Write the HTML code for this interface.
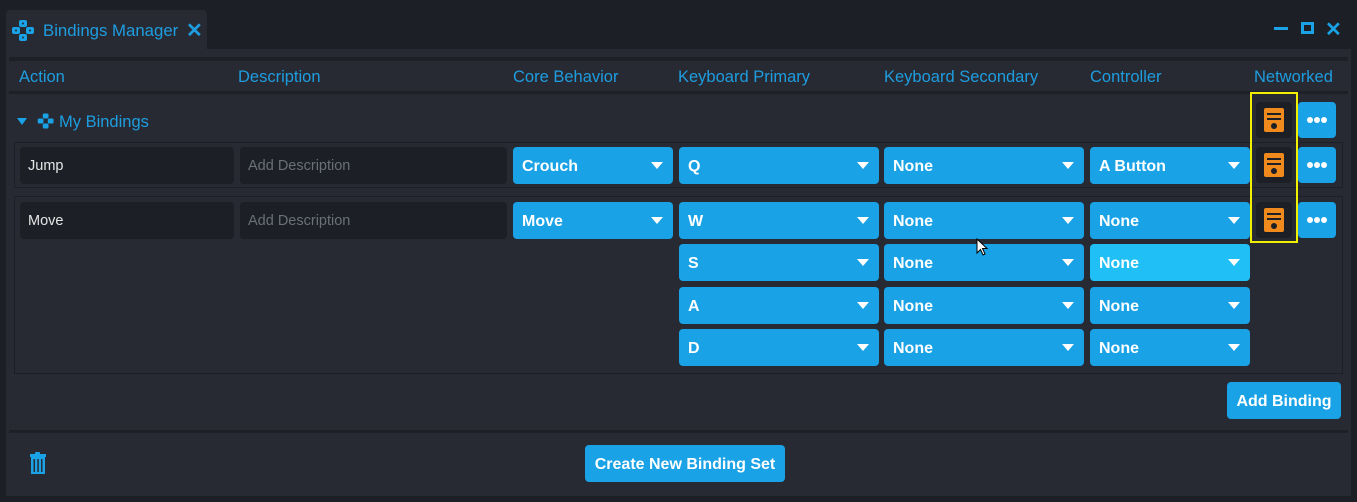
<!DOCTYPE html>
<html><head><meta charset="utf-8"><style>
*{box-sizing:border-box;margin:0;padding:0}
body{width:1357px;height:502px;background:#1c1f26;font-family:"Liberation Sans",sans-serif;position:relative;overflow:hidden}
.a{position:absolute}
.panel{left:6px;top:49px;width:1345px;height:447px;background:#272a33}
.tab{left:6px;top:10px;width:201px;height:40px;background:#272a33;border-radius:4px 4px 0 0}
.hd{color:#1e9de0;font-size:16.5px;top:68px}
.inp{height:37px;background:#1c1f26;border-radius:4px;font-size:14.5px;color:#e6e6e6;padding:0 0 0 8px;line-height:39px}
.ph{color:#6b6f78}
.dd{height:37px;background:#19a2e6;border-radius:4px;color:#fff;font-weight:bold;font-size:16px;line-height:39px;padding-left:9px}
.dd:after{content:"";position:absolute;right:10px;top:15px;border-left:6px solid transparent;border-right:6px solid transparent;border-top:7px solid #fff}
.net{width:36px;height:36px;background:#1c1f26;border-radius:4px}
.net i{position:absolute;left:8px;top:6px;width:20px;height:24px;background:#f08a1c;border-radius:2px}
.net i:before{content:"";position:absolute;left:3px;top:5px;width:14px;height:2px;background:#1c1f26;box-shadow:0 5px 0 #1c1f26}
.net i:after{content:"";position:absolute;left:7px;top:15px;width:6px;height:6px;border-radius:50%;background:#1c1f26}
.dots{width:38px;height:36px;background:#19a2e6;border-radius:4px}
.dots b{position:absolute;top:15px;width:6px;height:6px;border-radius:50%;background:#fff}
.box{border:1px solid #1c1f26}
.btn{background:#19a2e6;border-radius:4px;color:#fff;font-weight:bold;font-size:16px;text-align:center}
</style></head><body>
<div class="a tab"></div>
<div class="a panel"></div>
<svg class="a" style="left:11px;top:19px" width="25" height="23" viewBox="0 0 25 23"><g fill="#19a2e6"><rect x="8" y="1" width="8" height="7" rx="2"/><rect x="1" y="8" width="8" height="7" rx="2"/><rect x="15" y="8" width="8" height="7" rx="2"/><rect x="8" y="15" width="8" height="7" rx="2"/></g><g fill="#272a33"><circle cx="12" cy="4.5" r="1"/><circle cx="5" cy="11.5" r="1"/><circle cx="19" cy="11.5" r="1"/><circle cx="12" cy="18.5" r="1"/></g></svg>
<div class="a" style="left:43px;top:21px;color:#1e9de0;font-size:16.8px">Bindings Manager</div>
<div class="a" style="left:186px;top:18px;color:#1e9de0;font-size:20px;font-weight:bold">✕</div>
<div class="a" style="left:1274px;top:27px;width:14px;height:3px;background:#19a2e6"></div>
<div class="a" style="left:1301px;top:22px;width:13px;height:12px;border:3px solid #19a2e6"></div>
<div class="a" style="left:1325px;top:17px;color:#19a2e6;font-size:20px;font-weight:bold">✕</div>
<div class="a" style="left:9px;top:57px;width:1339px;height:4px;background:#1e2028"></div>
<div class="a" style="left:9px;top:91px;width:1339px;height:3px;background:#1e2028"></div>
<div class="a hd" style="left:19px">Action</div>
<div class="a hd" style="left:238px">Description</div>
<div class="a hd" style="left:513px">Core Behavior</div>
<div class="a hd" style="left:678px">Keyboard Primary</div>
<div class="a hd" style="left:884px">Keyboard Secondary</div>
<div class="a hd" style="left:1090px">Controller</div>
<div class="a hd" style="left:1254px">Networked</div>
<div class="a" style="left:17px;top:118px;border-left:5px solid transparent;border-right:5px solid transparent;border-top:7px solid #19a2e6"></div>
<svg class="a" style="left:37px;top:112px" width="18" height="18" viewBox="0 0 25 23"><g fill="#19a2e6"><rect x="8" y="1" width="8" height="7" rx="2"/><rect x="1" y="8" width="8" height="7" rx="2"/><rect x="15" y="8" width="8" height="7" rx="2"/><rect x="8" y="15" width="8" height="7" rx="2"/></g></svg>
<div class="a" style="left:59px;top:113px;color:#1e9de0;font-size:16.5px">My Bindings</div>
<div class="a box" style="left:14px;top:142px;width:1329px;height:46px"></div>
<div class="a box" style="left:14px;top:196px;width:1329px;height:178px"></div>
<div class="a inp" style="left:20px;top:147px;width:214px">Jump</div>
<div class="a inp ph" style="left:240px;top:147px;width:267px">Add Description</div>
<div class="a dd" style="left:513px;top:147px;width:160px">Crouch</div>
<div class="a dd" style="left:679px;top:147px;width:200px">Q</div>
<div class="a dd" style="left:884px;top:147px;width:200px">None</div>
<div class="a dd" style="left:1090px;top:147px;width:160px">A Button</div>
<div class="a inp" style="left:20px;top:202px;width:214px">Move</div>
<div class="a inp ph" style="left:240px;top:202px;width:267px">Add Description</div>
<div class="a dd" style="left:513px;top:202px;width:160px">Move</div>
<div class="a dd" style="left:679px;top:202px;width:200px">W</div>
<div class="a dd" style="left:884px;top:202px;width:200px">None</div>
<div class="a dd" style="left:1090px;top:202px;width:160px">None</div>
<div class="a dd" style="left:679px;top:244px;width:200px">S</div>
<div class="a dd" style="left:884px;top:244px;width:200px">None</div>
<div class="a dd" style="left:1090px;top:244px;width:160px;background:#20bff5">None</div>
<div class="a dd" style="left:679px;top:287px;width:200px">A</div>
<div class="a dd" style="left:884px;top:287px;width:200px">None</div>
<div class="a dd" style="left:1090px;top:287px;width:160px">None</div>
<div class="a dd" style="left:679px;top:329px;width:200px">D</div>
<div class="a dd" style="left:884px;top:329px;width:200px">None</div>
<div class="a dd" style="left:1090px;top:329px;width:160px">None</div>
<div class="a net" style="left:1256px;top:102px"><i></i></div>
<div class="a net" style="left:1256px;top:147px"><i></i></div>
<div class="a net" style="left:1256px;top:202px"><i></i></div>
<div class="a" style="left:1250px;top:92px;width:48px;height:151px;border:2px solid #f0f000"></div>
<div class="a dots" style="left:1298px;top:102px"><b style="left:9px"></b><b style="left:16px"></b><b style="left:23px"></b></div>
<div class="a dots" style="left:1298px;top:147px"><b style="left:9px"></b><b style="left:16px"></b><b style="left:23px"></b></div>
<div class="a dots" style="left:1298px;top:202px"><b style="left:9px"></b><b style="left:16px"></b><b style="left:23px"></b></div>
<svg class="a" style="left:976px;top:238px" width="14" height="20" viewBox="0 0 14 20"><path d="M1 1 L1 15 L4.5 11.5 L7 17 L9 16 L6.5 10.5 L11 10.5 Z" fill="#fff" stroke="#000" stroke-width="1"/></svg>
<div class="a btn" style="left:1227px;top:382px;width:114px;height:37px;line-height:39px">Add Binding</div>
<div class="a" style="left:9px;top:430px;width:1339px;height:3px;background:#1e2028"></div>
<svg class="a" style="left:29px;top:451px" width="18" height="24" viewBox="0 0 18 24"><rect x="6" y="1" width="5" height="3" rx="1" fill="#19a2e6"/><rect x="1" y="3" width="16" height="3" fill="#19a2e6"/><rect x="2" y="6" width="14" height="17" fill="#19a2e6"/><g fill="#272a33"><rect x="4.5" y="8" width="1.5" height="13"/><rect x="8.3" y="8" width="1.5" height="13"/><rect x="12" y="8" width="1.5" height="13"/></g></svg>
<div class="a btn" style="left:585px;top:445px;width:200px;height:37px;line-height:39px">Create New Binding Set</div>
</body></html>
